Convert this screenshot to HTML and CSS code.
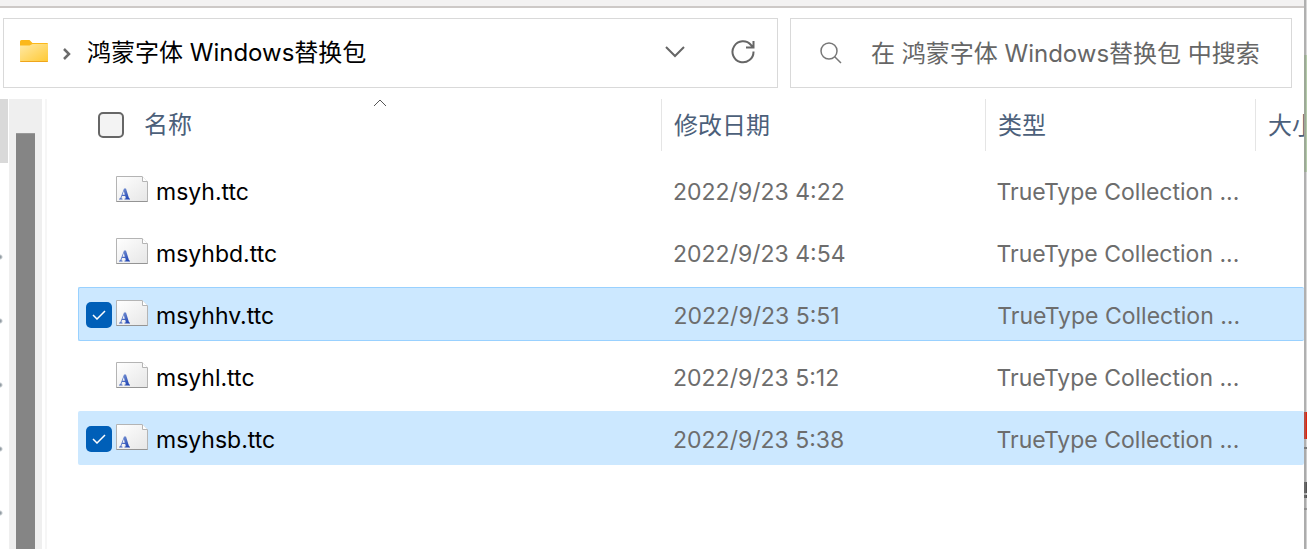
FILE: index.html
```html
<!DOCTYPE html>
<html lang="zh-CN">
<head>
<meta charset="utf-8">
<meta name="viewport" content="width=device-width, initial-scale=1">
<title>鸿蒙字体 Windows替换包</title>
<link rel="stylesheet" href="styles.css">
</head>
<body>
<svg class="defs" aria-hidden="true">
  <defs>
    <linearGradient id="paper" x1="0" y1="0" x2="1" y2="1"><stop offset="0" stop-color="#fff"/><stop offset="1" stop-color="#e6e6e6"/></linearGradient>
    <linearGradient id="letter" x1="0" y1="0" x2="1" y2="1"><stop offset="0" stop-color="#8ba3d8"/><stop offset="1" stop-color="#1239b0"/></linearGradient>
    <linearGradient id="folder" x1="0" y1="0" x2="1" y2="1"><stop offset="0" stop-color="#ffe9a6"/><stop offset="1" stop-color="#ffc933"/></linearGradient>
    <symbol id="font-file" viewBox="0 0 32 26">
      <path d="M.5.5H26L31.500 6V25.500H.5z" fill="url(#paper)" stroke="#b4b4b4"/>
      <path d="M.5 25.500H31.500" stroke="#949494"/>
      <path d="M26.500.5V5.500H31.500" fill="#fff" stroke="#b4b4b4"/>
      <path d="M3 23.500V22.700L4.300 22.200L8 12.500H10L13 22.200L14 22.700V23.500H8.500V22.700L9.800 22.200L9.200 20H6L5.300 22.200L6.500 22.700V23.500zM6.500 18.800H8.800L7.800 15z" fill="url(#letter)"/>
    </symbol>
  </defs>
</svg>
<div class="desktop">
  <main class="window">
    <div class="titlebar-edge"></div>
    <div class="toolbar">
      <nav class="address" aria-label="地址栏">
        <svg class="folder" viewBox="0 0 28 22" aria-hidden="true">
          <path d="M0 1.500Q0 0 1.500 0H9.500L12.500 3H27Q28 3 28 4V12H0z" fill="#fbb81c"/>
          <path d="M0 5.500H9.500L12.500 4H28V21Q28 22 27 22H1Q0 22 0 21z" fill="url(#folder)"/>
          <path d="M0 21H28Q28 22 27 22H1Q0 22 0 21z" fill="#efa51b"/>
        </svg>
        <svg class="crumb-arrow" viewBox="0 0 8 12" aria-hidden="true"><path d="M1 1L6 6L1 11"/></svg>
        <a class="crumb" href="#">鸿蒙字体 Windows替换包</a>
        <button class="tool" type="button" aria-label="以前的位置"><svg class="down" viewBox="0 0 20 12" aria-hidden="true"><path d="M1 1L10 10L19 1"/></svg></button>
        <button class="tool" type="button" aria-label="刷新"><svg class="refresh" viewBox="0 0 24 24" aria-hidden="true"><path d="M22.500 11.500A10.500 10.500 0 1 1 20 5L22 7M22.500 1V7.500H15"/></svg></button>
      </nav>
      <label class="search">
        <svg class="lens" viewBox="0 0 22 22" aria-hidden="true"><circle cx="9" cy="9" r="8"/><path d="M14.700 14.700L21 21"/></svg>
        <input class="search-input" type="text" placeholder="在 鸿蒙字体 Windows替换包 中搜索" aria-label="搜索">
      </label>
    </div>
    <div class="content">
      <div class="tree"><div class="tree-selected"></div></div>
      <div class="scrollbar"><div class="thumb"></div></div>
      <div class="splitter"></div>
      <table class="files">
        <thead>
          <tr class="head">
            <th class="head-name" scope="col">
              <input class="check-all" type="checkbox" aria-label="全选">名称
              <svg class="sort" viewBox="0 0 14 8" aria-hidden="true"><path d="M1 7L7 1L13 7"/></svg>
            </th>
            <th scope="col">修改日期</th><th scope="col">类型</th><th scope="col">大小</th>
          </tr>
        </thead>
        <tbody>
          <tr class="row"><td class="name"><input class="check" type="checkbox" aria-label="msyh.ttc"><svg class="file" aria-hidden="true"><use href="#font-file"/></svg>msyh.ttc</td><td>2022/9/23 4:22</td><td>TrueType Collection ...</td><td></td></tr>
          <tr class="row"><td class="name"><input class="check" type="checkbox" aria-label="msyhbd.ttc"><svg class="file" aria-hidden="true"><use href="#font-file"/></svg>msyhbd.ttc</td><td>2022/9/23 4:54</td><td>TrueType Collection ...</td><td></td></tr>
          <tr class="row selected focused"><td class="name"><span class="tick"><input class="check" type="checkbox" checked aria-label="msyhhv.ttc"><svg class="mark" viewBox="0 0 14 10" aria-hidden="true"><path d="M1 5L5 9L13 1"/></svg></span><svg class="file" aria-hidden="true"><use href="#font-file"/></svg>msyhhv.ttc</td><td>2022/9/23 5:51</td><td>TrueType Collection ...</td><td></td></tr>
          <tr class="row"><td class="name"><input class="check" type="checkbox" aria-label="msyhl.ttc"><svg class="file" aria-hidden="true"><use href="#font-file"/></svg>msyhl.ttc</td><td>2022/9/23 5:12</td><td>TrueType Collection ...</td><td></td></tr>
          <tr class="row selected"><td class="name"><span class="tick"><input class="check" type="checkbox" checked aria-label="msyhsb.ttc"><svg class="mark" viewBox="0 0 14 10" aria-hidden="true"><path d="M1 5L5 9L13 1"/></svg></span><svg class="file" aria-hidden="true"><use href="#font-file"/></svg>msyhsb.ttc</td><td>2022/9/23 5:38</td><td>TrueType Collection ...</td><td></td></tr>
        </tbody>
      </table>
    </div>
  </main>
  <div class="behind"></div>
</div>
</body>
</html>
```
FILE: styles.css
```css
* { box-sizing: border-box; }
body {
  margin: 0;
  font: 24px/32px Inter, "Noto Sans CJK SC", sans-serif;
  color: #000;
  background: #fff;
}
svg { display: block; flex: none; fill: none; }
.defs { position: absolute; width: 0; height: 0; }
.desktop { display: flex; height: 100vh; overflow: hidden; }
.window { flex: 1; min-width: 0; display: flex; flex-direction: column; overflow: hidden; }
.titlebar-edge { height: 8px; background: #f3f2f2; border-bottom: 2px solid #cdc9c7; }
.toolbar { display: grid; grid-template-columns: 775fr 502fr; gap: 12px; padding: 10px 12px 11px 3px; }
.address, .search {
  display: flex;
  align-items: center;
  height: 70px;
  min-width: 0;
  border: 1px solid #d9d9d9;
}
.address { padding: 0 22px 2px 16px; }
.folder { width: 28px; height: 22px; margin-top: -2px; }
.crumb-arrow { width: 8px; height: 12px; margin: 4px 16px 0 15px; stroke: #6b6b6b; stroke-width: 2.500; }
.crumb { flex: 1; padding-top: 2px; color: #000; text-decoration: none; white-space: nowrap; }
.tool { display: grid; place-items: center; width: 24px; height: 32px; padding: 0; border: 0; background: none; }
.tool + .tool { margin-left: 44px; }
.down { width: 20px; height: 12px; stroke: #666; stroke-width: 2; }
.refresh { width: 24px; height: 24px; stroke: #666; stroke-width: 2; }
.search { gap: 29px; padding: 0 16px 0 29px; }
.lens { width: 22px; height: 22px; stroke: #777; stroke-width: 1.500; }
.search-input { flex: 1; min-width: 0; padding: 2px 0 0; border: 0; outline: 0; font: inherit; color: #666; background: none; }
.search-input::placeholder { color: #666; opacity: 1; }
.content { flex: 1; min-height: 0; display: flex; }
.tree {
  width: 8px;
  flex: none;
  margin-right: 1px;
  background: radial-gradient(circle at 0 30px, #929ca3 1px, transparent 3px) 0 128px / 8px 64px;
}
.tree-selected { height: 128px; background: linear-gradient(#d9d9d9 64px, #fff 64px); }
.scrollbar { flex: none; width: 33px; padding: 34px 7px 0; background: #efefef; }
.thumb { height: 100%; background: #858585; border-top: 1px solid #999; }
.splitter { flex: none; width: 2px; margin: 0 31px 0 3px; background: #f6f6f6; }
.files { flex: 1; min-width: 0; display: block; overflow: hidden; }
thead, tbody { display: block; }
tbody { display: grid; gap: 8px; margin-top: 12px; }
.head, .row { display: grid; grid-template-columns: 583fr 324fr 270fr 49fr; }
.head { height: 52px; color: #4c607a; }
.head th { padding: 11px 0 0 12px; border-left: 1px solid #e5e5e5; font-weight: 400; text-align: left; white-space: nowrap; overflow: hidden; }
.head .head-name { position: relative; display: flex; align-items: center; gap: 20px; padding: 0 0 0 20px; border: 0; }
.check-all { appearance: none; flex: none; width: 26px; height: 26px; margin: 0; border: 2px solid #666; border-radius: 5px; background: #f3f3f3; }
.sort { position: absolute; top: 0; left: 50%; width: 14px; height: 8px; margin-left: 3px; stroke: #555; stroke-width: 1; }
.row { height: 54px; align-items: center; border: 1px solid transparent; border-radius: 2px; font-size: 23px; color: #6d6d6d; }
.row td { padding: 4px 0 0 12px; white-space: nowrap; }
.row .name { display: flex; align-items: center; padding: 4px 0 0 7px; color: #000; }
.selected { background: #cce8ff; }
.focused { border-color: #99d1ff; border-right: 0; }
.check { appearance: none; flex: none; width: 26px; height: 26px; margin: 0; border-radius: 5px; }
.name > .check { margin-right: 4px; }
.tick { position: relative; display: flex; margin: 0 4px 2px 0; }
.check:checked { background: #005fb8; }
.mark { position: absolute; inset: 8px 6px; width: 14px; height: 10px; stroke: #fff; stroke-width: 1.500; pointer-events: none; }
.file { width: 32px; height: 26px; margin: 0 8px 6px 0; }
.behind {
  flex: none;
  width: 3px;
  border-left: 2px solid rgba(128, 128, 128, .45);
  background: linear-gradient(#d8d8d8 55px, #b4cba9 55px, #b4cba9 172px, #d8d8d8 172px, #d8d8d8 412px, #e3210c 412px, #e3210c 439px, #d8d8d8 439px, #d8d8d8 447px, #777 447px, #777 449px, #ccc 449px, #ccc 482px, #555 482px, #555 493px, #ccc 493px, #ccc 495px, #555 495px, #555 498px, #ccc 498px, #ccc 508px, #999 508px, #999 510px, #d0d0d0 510px);
}
```
